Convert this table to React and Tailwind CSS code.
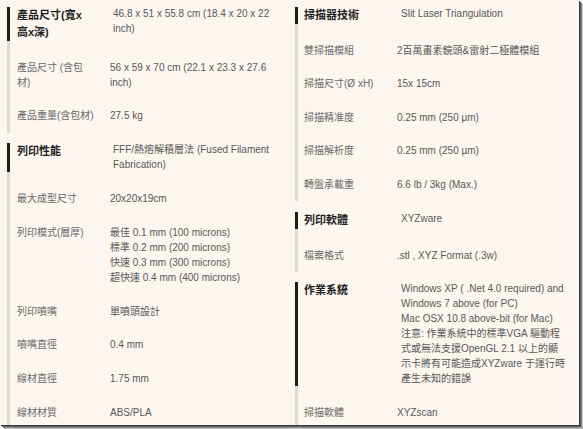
import React from 'react';

const left = [
  {
    title: ['產品尺寸(寬x', '高x深)'],
    value: ['46.8 x 51 x 55.8 cm (18.4 x 20 x 22', 'inch)'],
    rows: [
      { label: ['產品尺寸 (含包', '材)'], value: ['56 x 59 x 70 cm (22.1 x 23.3 x 27.6', 'inch)'] },
      { label: ['產品重量(含包材)'], value: ['27.5 kg'] },
    ],
  },
  {
    title: ['列印性能'],
    value: ['FFF/熱熔解積層法 (Fused Filament', 'Fabrication)'],
    rows: [
      { label: ['最大成型尺寸'], value: ['20x20x19cm'] },
      {
        label: ['列印模式(層厚)'],
        value: [
          '最佳 0.1 mm (100 microns)',
          '標準 0.2 mm (200 microns)',
          '快速 0.3 mm (300 microns)',
          '超快速 0.4 mm (400 microns)',
        ],
      },
      { label: ['列印噴嘴'], value: ['單噴頭設計'] },
      { label: ['噴嘴直徑'], value: ['0.4 mm'] },
      { label: ['線材直徑'], value: ['1.75 mm'] },
      { label: ['線材材質'], value: ['ABS/PLA'] },
    ],
  },
];

const right = [
  {
    title: ['掃描器技術'],
    value: ['Slit Laser Triangulation'],
    rows: [
      { label: ['雙掃描模組'], value: ['2百萬畫素鏡頭&雷射二極體模組'] },
      { label: ['掃描尺寸(Ø xH)'], value: ['15x 15cm'] },
      { label: ['掃描精准度'], value: ['0.25 mm (250 μm)'] },
      { label: ['掃描解析度'], value: ['0.25 mm (250 µm)'] },
      { label: ['轉盤承載重'], value: ['6.6 lb / 3kg (Max.)'] },
    ],
  },
  {
    title: ['列印軟體'],
    value: ['XYZware'],
    rows: [{ label: ['檔案格式'], value: ['.stl , XYZ Format (.3w)'] }],
  },
  {
    title: ['作業系統'],
    value: [
      'Windows XP ( .Net 4.0 required) and',
      'Windows 7 above (for PC)',
      'Mac OSX 10.8 above-bit (for Mac)',
      '注意: 作業系統中的標準VGA 驅動程',
      '式或無法支援OpenGL 2.1 以上的顯',
      '示卡將有可能造成XYZware 于運行時',
      '產生未知的錯誤',
    ],
    rows: [{ label: ['掃描軟體'], value: ['XYZscan'] }],
  },
];

const Lines = ({ lines }) =>
  lines.map((line, i) => (
    <div key={i} className="whitespace-nowrap">
      {line}
    </div>
  ));

const Section = ({ section, pad }) => (
  <div className="mb-[10.5px] border-l-[3px] border-[#dcdad6]">
    <div className="flex pb-[9.5px]">
      <div
        className={`-ml-[3px] border-l-[3px] border-[#1c1c1c] ${pad} w-[106px] shrink-0 text-[11px] leading-[17px] font-bold text-[#1e1e1e]`}
      >
        <Lines lines={section.title} />
      </div>
      <div className="-mt-[1px] text-[10px] leading-[15px] text-[#585858]">
        <Lines lines={section.value} />
      </div>
    </div>
    {section.rows.map((row, i) => (
      <div key={i} className={`flex py-[9.2px] ${pad}`}>
        <div className="w-[93px] shrink-0 text-[10px] leading-[15.2px] text-[#6a6a6a]">
          <Lines lines={row.label} />
        </div>
        <div className="text-[10px] leading-[15.2px] text-[#585858]">
          <Lines lines={row.value} />
        </div>
      </div>
    ))}
  </div>
);

export default function App() {
  return (
    <div className="w-[583px] h-[429px] bg-white">
      <div
        className="w-[579px] h-[425px] overflow-hidden bg-[#fdf6ee] shadow-[1px_1px_0_#3c3c3c,2px_2px_0_#5a5a5a,3px_3px_0_#8e8e8e,4px_4px_0_#c4c4c4] flex pt-[7px] pl-[7px]"
        style={{ fontFamily: '"Liberation Sans", "Noto Sans CJK TC", sans-serif' }}
      >
        <div className="w-[288px] shrink-0">
          {left.map((s, i) => (
            <Section key={i} section={s} pad="pl-[7px]" />
          ))}
        </div>
        <div className="flex-1">
          {right.map((s, i) => (
            <Section key={i} section={s} pad="pl-[6px]" />
          ))}
        </div>
      </div>
    </div>
  );
}
